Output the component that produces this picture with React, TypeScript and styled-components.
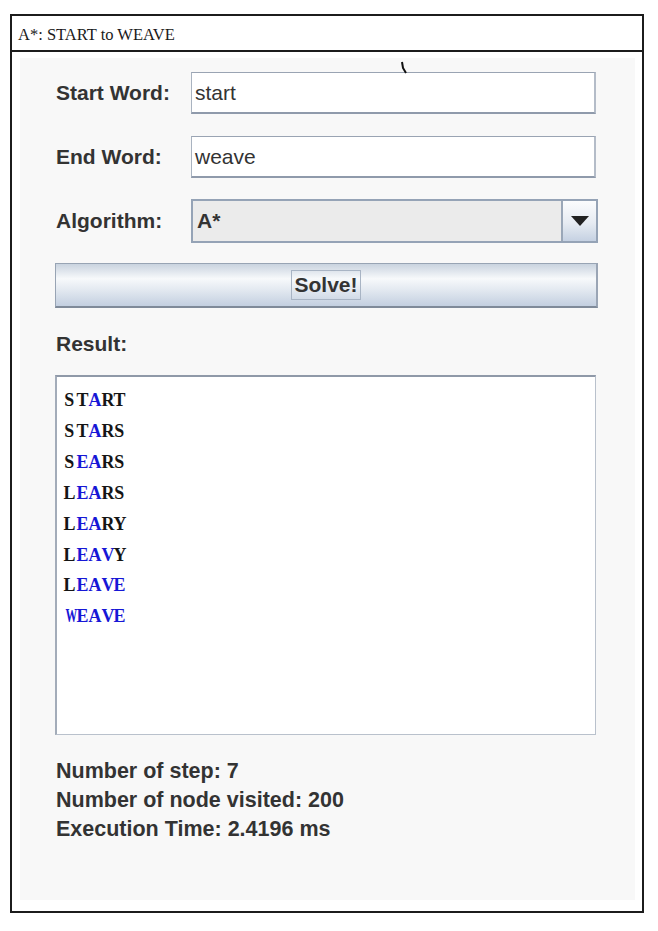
import React from "react";
import styled, { createGlobalStyle } from "styled-components";

const Global = createGlobalStyle`
  html, body { margin: 0; padding: 0; background: #ffffff; }
  body { font-family: "Liberation Sans", Arial, sans-serif; }
`;

const Frame = styled.div`
  box-sizing: border-box;
  margin: 14px 0 0 10px;
  width: 634px;
  height: 899px;
  border: 2px solid #1c1c1c;
  display: flex;
  flex-direction: column;
  background: #ffffff;
`;

const TitleBar = styled.div`
  height: 36px;
  border-bottom: 2px solid #1c1c1c;
  display: flex;
  align-items: center;
  padding-left: 6px;
  font-family: "Liberation Serif", "Times New Roman", serif;
  font-size: 16.5px;
  color: #1a1a1a;
  padding-top: 3px;
  box-sizing: border-box;
`;

const Body = styled.div`
  flex: 1;
  display: flex;
  padding: 6px 7px 11px 8px;
`;

const Panel = styled.div`
  position: relative;
  flex: 1;
  background: #f8f8f8;
  padding: 14px 0 0 35px;
  display: flex;
  flex-direction: column;
`;

const Row = styled.div<{ $gap?: number }>`
  display: flex;
  align-items: center;
  margin-bottom: ${(p) => p.$gap ?? 0}px;
`;

const Label = styled.div`
  width: 136px;
  font-size: 21px;
  font-weight: bold;
  color: #333333;
  padding-left: 1px;
  box-sizing: border-box;
`;

const TextField = styled.div`
  box-sizing: border-box;
  width: 405px;
  height: 42px;
  background: #ffffff;
  border: 1px solid #a9b3c0;
  border-top-color: #9aa4b3;
  border-bottom: 2px solid #8f9aab;
  border-right: 2px solid #b4bcc8;
  display: flex;
  align-items: center;
  padding-left: 3px;
  font-size: 21px;
  color: #333333;
`;

const Combo = styled.div`
  box-sizing: border-box;
  width: 407px;
  height: 44px;
  display: flex;
  border: 2px solid #95a3b6;
  background: #ebebeb;
`;

const ComboValue = styled.div`
  flex: 1;
  display: flex;
  align-items: center;
  padding-left: 4px;
  font-size: 21px;
  font-weight: bold;
  color: #333333;
  border-right: 2px solid #9aa7b8;
`;

const ComboArrow = styled.div`
  width: 33px;
  display: flex;
  align-items: center;
  justify-content: center;
  background: linear-gradient(#fbfcfd, #e6ebf2 55%, #c5d1e2);
`;

const SolveButton = styled.div`
  box-sizing: border-box;
  width: 543px;
  height: 45px;
  border: 1px solid #98a4b4;
  border-bottom: 2px solid #7f8a99;
  border-right: 2px solid #9aa5b5;
  background: linear-gradient(#c9d3df, #f7f9fb 35%, #e4eaf1 60%, #c3cfe0);
  display: flex;
  align-items: center;
  justify-content: center;
`;

const FocusBox = styled.span`
  border: 1px solid #a8b4c4;
  padding: 2px 2px;
  font-size: 21px;
  font-weight: bold;
  color: #333333;
  line-height: 24px;
`;

const Heading = styled.div`
  margin-top: 24px;
  font-size: 21px;
  font-weight: bold;
  color: #333333;
  line-height: 24px;
  padding-left: 1px;
`;

const ResultArea = styled.div`
  box-sizing: border-box;
  margin-top: 19px;
  width: 541px;
  height: 360px;
  background: #ffffff;
  border: 1px solid #b9c1cc;
  border-top: 2px solid #8f99a8;
  border-left: 2px solid #a3acb9;
  padding: 8px 0 0 6px;
`;

const Word = styled.div`
  font-family: "Liberation Serif", "Times New Roman", serif;
  font-weight: bold;
  font-size: 19.5px;
  line-height: 30.9px;
  color: #151515;
`;

const Letter = styled.span<{ $hit: boolean; $wide: boolean }>`
  display: inline-block;
  width: 12.6px;
  text-align: center;
  transform: ${(p) => (p.$wide ? "scaleX(0.6)" : "scaleX(0.92)")};
  color: ${(p) => (p.$hit ? "#1717d6" : "#151515")};
`;

const Stats = styled.div`
  margin-top: 22px;
  padding-left: 1px;
`;

const StatLine = styled.div`
  font-size: 21.5px;
  font-weight: bold;
  color: #333333;
  line-height: 29px;
`;

const Cursor = styled.svg`
  position: absolute;
  left: 380px;
  top: 3px;
`;

const target = "WEAVE";
const words = ["START", "STARS", "SEARS", "LEARS", "LEARY", "LEAVY", "LEAVE", "WEAVE"];

export default function App() {
  return (
    <>
      <Global />
      <Frame>
        <TitleBar>A*: START to WEAVE</TitleBar>
        <Body>
          <Panel>
            <Cursor width="10" height="16" viewBox="0 0 10 16">
              <path d="M2 1 L3 7 L6 12" stroke="#111" strokeWidth="2" fill="none" />
            </Cursor>
            <Row $gap={22}>
              <Label>Start Word:</Label>
              <TextField>start</TextField>
            </Row>
            <Row $gap={21}>
              <Label>End Word:</Label>
              <TextField>weave</TextField>
            </Row>
            <Row $gap={20}>
              <Label>Algorithm:</Label>
              <Combo>
                <ComboValue>A*</ComboValue>
                <ComboArrow>
                  <svg width="18" height="10" viewBox="0 0 18 10">
                    <path d="M0 0 H18 L9 10 Z" fill="#222" />
                  </svg>
                </ComboArrow>
              </Combo>
            </Row>
            <SolveButton>
              <FocusBox>Solve!</FocusBox>
            </SolveButton>
            <Heading>Result:</Heading>
            <ResultArea>
              {words.map((w) => (
                <Word key={w}>
                  {w.split("").map((c, i) => (
                    <Letter key={i} $hit={c === target[i]} $wide={c === "W" || c === "M"}>
                      {c}
                    </Letter>
                  ))}
                </Word>
              ))}
            </ResultArea>
            <Stats>
              <StatLine>Number of step: 7</StatLine>
              <StatLine>Number of node visited: 200</StatLine>
              <StatLine>Execution Time: 2.4196 ms</StatLine>
            </Stats>
          </Panel>
        </Body>
      </Frame>
    </>
  );
}
